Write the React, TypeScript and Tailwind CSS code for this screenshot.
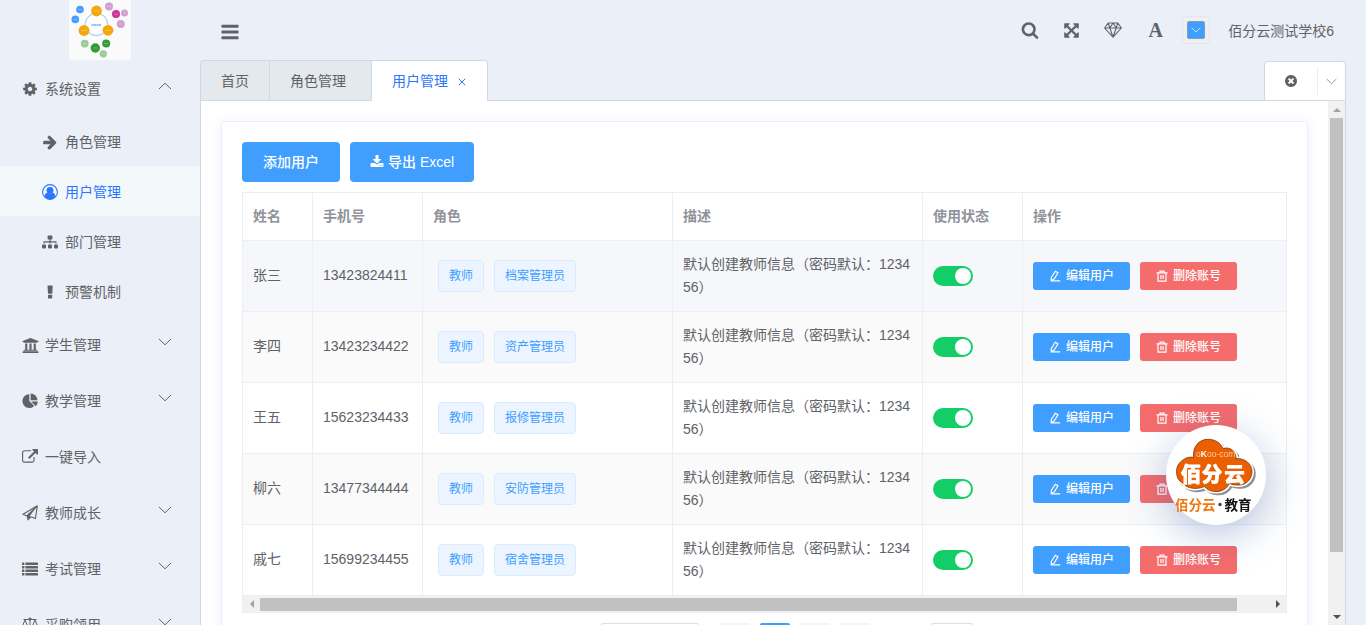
import React from 'react';
import { FaSitemap, FaUniversity } from 'react-icons/fa';

type IconProps = { className?: string };

const paths = {
    cog: 'M1152 896q0-106-75-181t-181-75-181 75-75 181 75 181 181 75 181-75 75-181zm512-109v222q0 12-8 23t-20 13l-185 28q-19 54-39 91 35 50 107 138 10 12 10 25t-9 23q-27 37-99 108t-94 71q-12 0-26-9l-138-108q-44 23-91 38-16 136-29 186-7 28-36 28h-222q-14 0-24.5-8.5t-11.5-21.5l-28-184q-49-16-90-37l-141 107q-10 9-25 9-14 0-25-11-126-114-165-168-7-10-7-23 0-12 8-23 15-21 51-66.5t54-70.5q-27-50-41-99l-183-27q-13-2-21-12.5t-8-23.5v-222q0-12 8-23t19-13l186-28q14-46 39-92-40-57-107-138-10-12-10-24 0-10 9-23 26-36 98.5-107.5t94.5-71.5q13 0 26 10l138 107q44-23 91-38 16-136 29-186 7-28 36-28h222q14 0 24.5 8.5t11.5 21.5l28 184q49 16 90 37l142-107q9-9 24-9 13 0 25 10 129 119 165 170 7 8 7 22 0 12-8 23-15 21-51 66.5t-54 70.5q26 50 41 98l183 28q13 2 21 12.5t8 23.5z',
    arrowRight:
        'M1600 960q0 54-37 91l-651 651q-39 37-91 37-51 0-90-37l-75-75q-38-38-38-91t38-91l293-293h-704q-52 0-84.5-37.5t-32.5-90.5v-128q0-53 32.5-90.5t84.5-37.5h704l-293-294q-38-36-38-90t38-90l75-75q38-38 90-38 53 0 91 38l651 651q37 35 37 90z',
    bars: 'M1664 1344v128q0 26-19 45t-45 19h-1408q-26 0-45-19t-19-45v-128q0-26 19-45t45-19h1408q26 0 45 19t19 45zm0-512v128q0 26-19 45t-45 19h-1408q-26 0-45-19t-19-45v-128q0-26 19-45t45-19h1408q26 0 45 19t19 45zm0-512v128q0 26-19 45t-45 19h-1408q-26 0-45-19t-19-45v-128q0-26 19-45t45-19h1408q26 0 45 19t19 45z',
    search: 'M1216 832q0-185-131.5-316.5t-316.5-131.5-316.5 131.5-131.5 316.5 131.5 316.5 316.5 131.5 316.5-131.5 131.5-316.5zm512 832q0 52-38 90t-90 38q-54 0-90-38l-343-342q-179 124-399 124-143 0-273.5-55.5t-225-150-150-225-55.5-273.5 55.5-273.5 150-225 225-150 273.5-55.5 273.5 55.5 225 150 150 225 55.5 273.5q0 220-124 399l343 343q37 37 37 90z',
    externalLink:
        'M1408 928v320q0 119-84.5 203.5t-203.5 84.5h-832q-119 0-203.5-84.5t-84.5-203.5v-832q0-119 84.5-203.5t203.5-84.5h704q14 0 23 9t9 23v64q0 14-9 23t-23 9h-704q-66 0-113 47t-47 113v832q0 66 47 113t113 47h832q66 0 113-47t47-113v-320q0-14 9-23t23-9h64q14 0 23 9t9 23zm384-864v512q0 26-19 45t-45 19-45-19l-176-176-652 652q-10 10-23 10t-23-10l-114-114q-10-10-10-23t10-23l652-652-176-176q-19-19-19-45t19-45 45-19h512q26 0 45 19t19 45z',
    timesCircle:
        'M1277 1122q0-26-19-45l-181-181 181-181q19-19 19-45 0-27-19-46l-90-90q-19-19-46-19-26 0-45 19l-181 181-181-181q-19-19-45-19-27 0-46 19l-90 90q-19 19-19 46 0 26 19 45l181 181-181 181q-19 19-19 45 0 27 19 46l90 90q19 19 46 19 26 0 45-19l181-181 181 181q19 19 45 19 27 0 46-19l90-90q19-19 19-46zm387-226q0 209-103 385.5t-279.5 279.5-385.5 103-385.5-103-279.5-279.5-103-385.5 103-385.5 279.5-279.5 385.5-103 385.5 103 279.5 279.5 103 385.5z',
    expand: 'M1411 541l-355 355 355 355 144-144q29-31 70-14 39 17 39 59v448q0 26-19 45t-45 19h-448q-42 0-59-40-17-39 14-69l144-144-355-355-355 355 144 144q31 30 14 69-17 40-59 40h-448q-26 0-45-19t-19-45v-448q0-42 40-59 39-17 69 14l144 144 355-355-355-355-144 144q-19 19-45 19-12 0-24-5-40-17-40-59v-448q0-26 19-45t45-19h448q42 0 59 40 17 39-14 69l-144 144 355 355 355-355-144-144q-31-30-14-69 17-40 59-40h448q26 0 45 19t19 45v448q0 42-39 59-13 5-25 5-26 0-45-19z',
    download:
        'M1344 1344q0-26-19-45t-45-19-45 19-19 45 19 45 45 19 45-19 19-45zm256 0q0-26-19-45t-45-19-45 19-19 45 19 45 45 19 45-19 19-45zm128-224v320q0 40-28 68t-68 28h-1472q-40 0-68-28t-28-68v-320q0-40 28-68t68-28h465l135 136q58 56 136 56t136-56l136-136h464q40 0 68 28t28 68zm-325-569q17 41-14 70l-448 448q-18 19-45 19t-45-19l-448-448q-31-29-14-70 17-39 59-39h256v-448q0-26 19-45t45-19h256q26 0 45 19t19 45v448h256q42 0 59 39z',
};

const Glyph = ({ name, className }: IconProps & { name: keyof typeof paths }) => (
    <svg viewBox="0 0 1792 1792" fill="currentColor" className={className} aria-hidden="true">
        <path d={paths[name]} />
    </svg>
);

const UserIcon = ({ className }: IconProps) => (
    <svg viewBox="0 0 16 16" className={className} aria-hidden="true">
        <circle cx="8" cy="8" r="7.4" fill="none" stroke="currentColor" strokeWidth="1.1" />
        <circle cx="8" cy="6.3" r="3.4" fill="currentColor" />
        <path d="M2.4 12.6c.4-2 1.4-3.7 3.100-4 .7.7 1.500 1 2.500 1s1.800-.3 2.500-1c1.700.3 2.700 2 3.100 4A7.200 7.200 0 0 1 8 15.400a7.200 7.200 0 0 1-5.600-2.800z" fill="currentColor" />
    </svg>
);

const ExclamationIcon = ({ className }: IconProps) => (
    <svg viewBox="0 0 14 14" fill="currentColor" className={className} aria-hidden="true">
        <path d="M5 .5h4.200c.3 0 .5.2.5.5l-.4 7.200c0 .3-.2.5-.5.5H5.500c-.3 0-.5-.2-.5-.5L4.500 1c0-.3.2-.5.5-.5z" />
        <rect x="5" y="9.800" width="4.200" height="3.600" rx=".5" />
    </svg>
);

const PieIcon = ({ className }: IconProps) => (
    <svg viewBox="0 0 16 16" fill="currentColor" className={className} aria-hidden="true">
        <path d="M7.300 1.200v6.900l4.900 4.900A6.900 6.900 0 1 1 7.300 1.200z" />
        <path d="M8.600.5a6.800 6.800 0 0 1 6.800 6.800H8.600z" />
        <path d="M9 8.500h6.800a6.800 6.800 0 0 1-2 4.700z" />
    </svg>
);

const PlaneIcon = ({ className }: IconProps) => (
    <svg viewBox="0 0 16 16" className={className} aria-hidden="true">
        <path d="M15.300.8 1 9.200l3.900 1.700L15.300.8l-1.900 12.800-4.500-1.900" fill="none" stroke="currentColor" strokeWidth="1.100" strokeLinejoin="round" />
        <path d="M4.800 10.500 15.300.8 7.800 10.900l1.600 1.300-3.900 3.600z" fill="currentColor" />
    </svg>
);

const ListIcon = ({ className }: IconProps) => (
    <svg viewBox="0 0 16 16" fill="currentColor" className={className} aria-hidden="true">
        {[1.6, 5.1, 8.6, 12.1].map((y) => (
            <g key={y}>
                <rect x="0" y={y} width="2.4" height="2.4" rx=".3" />
                <rect x="3.4" y={y} width="12.6" height="2.4" rx=".3" />
            </g>
        ))}
    </svg>
);

const ScaleIcon = ({ className }: IconProps) => (
    <svg viewBox="0 0 18 16" fill="none" stroke="currentColor" strokeWidth="1" className={className} aria-hidden="true">
        <path d="M2.500 2.500h13M9 2v12.500M5.500 14.800h7M4 3 1 10h6zM14 3l-3 7h6z" />
        <circle cx="9" cy="2" r="1.100" fill="currentColor" />
        <path d="M1 10a3 2.500 0 0 0 6 0zM11 10a3 2.500 0 0 0 6 0z" fill="currentColor" />
    </svg>
);

const DiamondIcon = ({ className }: IconProps) => (
    <svg viewBox="0 0 18 16" fill="none" stroke="currentColor" strokeWidth="1.1" strokeLinejoin="round" className={className} aria-hidden="true">
        <path d="M4.200 1h9.600l3.600 5L9 15.200.6 6zM.6 6h16.800M5.800 6 9 15l3.200-9M4.200 1l1.600 5L9 1l3.200 5 1.600-5" />
    </svg>
);

const Chevron = ({ className }: IconProps) => (
    <svg viewBox="0 0 14 14" fill="none" stroke="currentColor" strokeWidth="1" strokeLinecap="round" className={className} aria-hidden="true">
        <path d="M1.200 4.200 7 9.800l5.800-5.600" />
    </svg>
);

const EditIcon = ({ className }: IconProps) => (
    <svg viewBox="0 0 12 12" fill="none" stroke="currentColor" strokeWidth="1.2" strokeLinejoin="round" className={className} aria-hidden="true">
        <path d="M6.300 1.200 9 2.700 5.200 9 2.200 10.500 2.300 7.500zM1.600 10.800h9.600" />
    </svg>
);

const TrashIcon = ({ className }: IconProps) => (
    <svg viewBox="0 0 12 12" fill="none" stroke="currentColor" strokeWidth="1.2" className={className} aria-hidden="true">
        <path d="M.5 2.800h11M4 2.800V1.100h4v1.700M2 2.800v8.400h8V2.800M4.900 5v4M7.100 5v4" />
    </svg>
);

const SchoolLogo = () => (
    <svg viewBox="0 0 62 60" className="h-15 w-[62px]" role="img" aria-label="logo">
        <rect width="62" height="60" fill="#fafafa" />
        <circle cx="27.5" cy="24.5" r="15" fill="#fff" />
        <circle cx="27.5" cy="24.5" r="11.2" fill="#fff" stroke="#a9d2f8" strokeWidth="1.2" />
        <path d="M22.500 25h10" stroke="#8fc4f5" strokeWidth="2" strokeDasharray="2.200 .3" />
        <g fill="#f5a60a">
            <circle cx="27.5" cy="11" r="5.4" />
            <circle cx="15" cy="30.5" r="5.4" />
            <circle cx="39" cy="30.3" r="5.4" />
        </g>
        <g fill="#409eff">
            <circle cx="11" cy="9.5" r="3.8" />
            <circle cx="6.300" cy="19.4" r="3.8" />
        </g>
        <g fill="#d09fd2">
            <circle cx="40" cy="6.5" r="4" />
            <circle cx="55.5" cy="13" r="3.5" />
            <circle cx="51.7" cy="24" r="4" />
        </g>
        <circle cx="47" cy="14" r="4" fill="#ca319b" />
        <g fill="#98cb98">
            <circle cx="15.7" cy="43.6" r="3.9" />
            <circle cx="34.3" cy="53.8" r="3.6" />
        </g>
        <g fill="#329b37">
            <circle cx="26.3" cy="48" r="4.7" />
            <circle cx="37.2" cy="43.6" r="4" />
        </g>
        <path d="M24.500 11h6M12 30.500h6M36.500 30.500h5M9 9.600h4M4.500 19.400h4M24 48h4.600M35.200 43.600h4M45 14.200h4M38 6.500h4M54 13h3M50 24h3.500M13.700 43.600h4M32.500 53.800h3.600" stroke="#fff" strokeOpacity=".4" strokeWidth=".8" />
    </svg>
);

const cloud =
    'M17 35C20 32.500 24 31.500 27.500 32.500C26.500 21.500 33 14.300 42 14.300C49.500 14.300 54.500 18 57 23.500C64 21.500 70 26 70 33.500C79 33 86 39 86 46.500C86 55 79 61 71 60C68.500 60 65.500 59.500 63.500 58.500C60 65 54 67 49 66.500C44 66.300 41 64.500 38.500 61.500C31 65 20.500 63.500 17.500 58.500C12.500 56.500 10.500 51.500 10.500 46.500C10.500 41.500 13 37.500 17 35Z';

const CloudLogo = () => (
    <svg viewBox="0 0 100 100" className="size-full" role="img" aria-label="佰分云教育">
        <path d={cloud} transform="translate(2 2)" fill="#8f8f8f" stroke="#8f8f8f" strokeWidth="3.5" />
        <path d={cloud} fill="#ea6000" stroke="#fff" strokeWidth="4" />
        <path d={cloud} fill="#ea6000" stroke="#7a3a12" strokeWidth=".8" />
        <g fontFamily="'Liberation Sans','Noto Sans CJK SC',sans-serif">
            <text x="30" y="31.500" fontSize="8.5" fill="#ffc9a0">
                o<tspan fontWeight="700" fill="#fff">K</tspan>oo-com
            </text>
            <text x="15 36 58.500" y="56.500" fontSize="20" fontWeight="700" fill="#fff" stroke="#fff" strokeWidth="1.2" strokeLinejoin="round">
                佰分云
            </text>
            <g fontSize="13.5" fontWeight="700">
                <text x="9" y="85" fill="#f07810">佰分云</text>
                <text x="58.5" y="85" fill="#111">教育</text>
            </g>
        </g>
        <circle cx="54" cy="79.5" r="1.7" fill="#444" />
    </svg>
);

const subMenus = [
    { label: '角色管理', icon: <Glyph name="arrowRight" className="size-4" /> },
    { label: '用户管理', icon: <UserIcon className="size-4" />, active: true },
    { label: '部门管理', icon: <FaSitemap className="size-4" /> },
    { label: '预警机制', icon: <ExclamationIcon className="size-[14px]" /> },
];

const menus = [
    { label: '学生管理', icon: <FaUniversity className="size-[17px]" />, children: true },
    { label: '教学管理', icon: <PieIcon className="size-4" />, children: true },
    { label: '一键导入', icon: <Glyph name="externalLink" className="size-4" /> },
    { label: '教师成长', icon: <PlaneIcon className="size-4" />, children: true },
    { label: '考试管理', icon: <ListIcon className="size-4" />, children: true },
    { label: '采购领用', icon: <ScaleIcon className="h-4 w-[18px]" />, children: true },
];

const users = [
    { name: '张三', phone: '13423824411', role: '档案管理员', bg: 'bg-[#f5f7fa]' },
    { name: '李四', phone: '13423234422', role: '资产管理员', bg: 'bg-[#fafafa]' },
    { name: '王五', phone: '15623234433', role: '报修管理员', bg: 'bg-white' },
    { name: '柳六', phone: '13477344444', role: '安防管理员', bg: 'bg-[#fafafa]' },
    { name: '戚七', phone: '15699234455', role: '宿舍管理员', bg: 'bg-white' },
];

const Sidebar = () => (
    <aside className="w-50 shrink-0">
        <div className="flex h-15 justify-center">
            <SchoolLogo />
        </div>
        <nav>
            <a href="#" className="flex h-14 items-center gap-[5px] px-5 pt-0.5">
                <span className="flex w-5 justify-center">
                    <Glyph name="cog" className="size-4" />
                </span>
                <span className="flex-1">系统设置</span>
                <span className="mr-2 pb-1.5">
                    <Chevron className="size-[14px] rotate-180" />
                </span>
            </a>
            {subMenus.map((item) => (
                <a
                    key={item.label}
                    href="#"
                    className={`flex h-[50px] items-center gap-[5px] pt-0.5 pl-10 ${
                        item.active ? 'bg-[#f3f8fb] text-[#2d74ff]' : ''
                    }`}
                >
                    <span className="flex w-5 justify-center">{item.icon}</span>
                    {item.label}
                </a>
            ))}
            {menus.map((item) => (
                <a key={item.label} href="#" className="flex h-14 items-center gap-[5px] px-5 pt-0.5">
                    <span className="flex w-5 justify-center">{item.icon}</span>
                    <span className="flex-1">{item.label}</span>
                    {item.children && (
                        <span className="mr-2 pb-1.5">
                            <Chevron className="size-[14px]" />
                        </span>
                    )}
                </a>
            ))}
        </nav>
    </aside>
);

const Header = () => (
    <header className="flex h-15 items-center justify-between pr-3 pl-5">
        <button type="button" aria-label="折叠菜单" className="pt-1">
            <Glyph name="bars" className="size-5" />
        </button>
        <div className="flex items-center">
            <button type="button" aria-label="搜索" className="flex w-10 justify-center">
                <Glyph name="search" className="size-[18px]" />
            </button>
            <button type="button" aria-label="全屏" className="flex w-[42px] justify-center">
                <Glyph name="expand" className="size-[17px]" />
            </button>
            <button type="button" aria-label="主题" className="flex w-[42px] justify-center">
                <DiamondIcon className="h-4 w-[18px]" />
            </button>
            <button type="button" className="flex w-[43px] justify-center font-['Liberation_Serif',serif] text-xl font-bold">
                A
            </button>
            <button
                type="button"
                aria-label="颜色"
                className="ml-[5px] flex size-7 items-center justify-center rounded border border-[#e6e6e6]"
            >
                <span className="flex size-[18px] items-center justify-center rounded-xs border border-[#8a99ad] bg-[#409eff] text-white">
                    <Chevron className="size-[10px]" />
                </span>
            </button>
            <a href="#" className="ml-[18px] pt-0.5">
                佰分云测试学校6
            </a>
        </div>
    </header>
);

const Tabs = () => (
    <div className="flex h-[41px]">
        <a href="#" className="flex items-center rounded-tl border border-[#cfd8e6] bg-[#e4e9ed] px-5">
            首页
        </a>
        <a href="#" className="flex items-center border-y border-r border-[#cfd8e6] bg-[#e4e9ed] pr-[25px] pl-5">
            角色管理
        </a>
        <div className="flex items-center gap-[5px] rounded-tr border-t border-r border-[#cfd8e6] bg-white px-5 text-[#2d74ff]">
            <a href="#">用户管理</a>
            <button type="button" aria-label="关闭" className="flex w-[14px] justify-end pt-0.5 pr-px">
                <svg viewBox="0 0 8 8" className="size-2" stroke="currentColor" strokeWidth="1">
                    <path d="M.7.7l6.600 6.600M7.300.7.7 7.300" />
                </svg>
            </button>
        </div>
        <div className="flex-1 border-b border-[#cfd8e6]" />
        <div className="mt-px flex items-center rounded-t border border-[#cfd8e6] bg-white">
            <button type="button" aria-label="关闭全部" className="flex h-7 w-[53px] items-center justify-center border-r border-[#e8edf2]">
                <Glyph name="timesCircle" className="size-[14px]" />
            </button>
            <button type="button" aria-label="更多" className="flex w-[27px] justify-center text-[#5488b4]">
                <Chevron className="size-[11px]" />
            </button>
        </div>
    </div>
);

const UserTable = () => (
    <div className="mt-2.5 border border-[#ebeef5]">
        <table className="w-full table-fixed border-separate border-spacing-0 text-left leading-[23px]">
            <colgroup>
                <col className="w-[70px]" />
                <col className="w-[110px]" />
                <col className="w-[250px]" />
                <col className="w-[250px]" />
                <col className="w-[100px]" />
                <col />
            </colgroup>
            <thead className="text-[#909399]">
                <tr>
                    {['姓名', '手机号', '角色', '描述', '使用状态', '操作'].map((title) => (
                        <th key={title} className="border-r border-b border-[#ebeef5] px-2.5 py-3 font-bold last:border-r-0">
                            {title}
                        </th>
                    ))}
                </tr>
            </thead>
            <tbody>
                {users.map((user) => (
                    <tr key={user.phone} className={user.bg}>
                        <td className="border-r border-b border-[#ebeef5] px-2.5 pb-0.5">{user.name}</td>
                        <td className="border-r border-b border-[#ebeef5] px-2.5 pb-0.5">{user.phone}</td>
                        <td className="border-r border-b border-[#ebeef5] px-2.5">
                            <div className="flex gap-2.5 pl-[5px] text-xs text-[#409eff]">
                                <span className="flex h-8 items-center rounded border border-[#d9ecff] bg-[#ecf5ff] px-2.5">
                                    教师
                                </span>
                                <span className="flex h-8 items-center rounded border border-[#d9ecff] bg-[#ecf5ff] px-2.5">
                                    {user.role}
                                </span>
                            </div>
                        </td>
                        <td className="border-r border-b border-[#ebeef5] px-2.5 py-3 break-all">
                            默认创建教师信息（密码默认：123456）
                        </td>
                        <td className="border-r border-b border-[#ebeef5] px-2.5">
                            <input
                                type="checkbox"
                                role="switch"
                                defaultChecked
                                aria-label={`${user.name} 使用状态`}
                                className="flex h-5 w-10 appearance-none items-center rounded-full bg-[#c0ccda] px-0.5 before:size-4 before:rounded-full before:bg-white checked:justify-end checked:bg-[#13ce66]"
                            />
                        </td>
                        <td className="border-b border-[#ebeef5] px-2.5">
                            <div className="flex gap-2.5 text-xs font-medium text-white">
                                <button type="button" className="flex h-7 items-center gap-[5px] rounded-[3px] bg-[#409eff] px-4">
                                    <EditIcon className="size-3" />
                                    编辑用户
                                </button>
                                <button type="button" className="flex h-7 items-center gap-[5px] rounded-[3px] bg-[#f56c6c] px-4">
                                    <TrashIcon className="size-3" />
                                    删除账号
                                </button>
                            </div>
                        </td>
                    </tr>
                ))}
            </tbody>
        </table>
        {/* horizontal scroll bar */}
        <div className="flex h-4 items-center bg-[#f1f1f1]">
            <span className="flex w-[17px] justify-center">
                <svg viewBox="0 0 4 8" className="h-2 w-1" fill="#a3a3a3">
                    <path d="M4 0v8L0 4z" />
                </svg>
            </span>
            <div className="flex-1 pr-8">
                <div className="h-[13px] bg-[#c1c1c1]" />
            </div>
            <span className="flex w-[17px] justify-center">
                <svg viewBox="0 0 4 8" className="h-2 w-1" fill="#505050">
                    <path d="M0 0v8l4-4z" />
                </svg>
            </span>
        </div>
    </div>
);

const Pagination = () => (
    <div className="mt-2.5 flex h-7 justify-center pl-[45px]">
        <select aria-label="每页条数" className="w-[100px] appearance-none rounded-[3px] border border-[#dcdfe6] bg-white" />
        <button type="button" aria-label="上一页" className="ml-5 w-[30px] rounded-xs bg-[#f4f4f5]" />
        <button type="button" aria-label="第一页" className="ml-2.5 w-[30px] rounded-xs bg-[#409eff]" />
        <button type="button" aria-label="第二页" className="ml-2.5 w-[30px] rounded-xs bg-[#f4f4f5]" />
        <button type="button" aria-label="下一页" className="ml-2.5 w-[30px] rounded-xs bg-[#f4f4f5]" />
        <input aria-label="前往页码" className="ml-15 w-11 rounded-[3px] border border-[#dcdfe6] bg-white" />
    </div>
);

export const App = () => {
    return (
        <div
            lang="zh-CN"
            className="flex h-screen overflow-hidden bg-[#ebeff7] font-['Liberation_Sans','Noto_Sans_CJK_SC',sans-serif] text-sm text-[#606266]"
        >
            <Sidebar />
            <div className="flex min-w-0 flex-1 flex-col pr-5">
                <Header />
                <Tabs />
                <div className="flex min-h-0 flex-1 border-x border-[#cfd8e6] bg-white">
                    <main className="min-w-0 flex-1 overflow-hidden p-5">
                        <section className="rounded border border-[#ebeef5] bg-white p-5 shadow-[0_2px_12px_0_rgba(80,110,255,0.1)]">
                            <div className="flex gap-2.5 font-medium text-white">
                                <button type="button" className="h-10 rounded bg-[#409eff] px-[21px]">
                                    添加用户
                                </button>
                                <button type="button" className="flex h-10 items-center gap-1 rounded bg-[#409eff] px-5">
                                    <Glyph name="download" className="size-[14px]" />
                                    导出 Excel
                                </button>
                            </div>
                            <UserTable />
                            <Pagination />
                        </section>
                    </main>
                    {/* vertical scroll bar */}
                    <div className="flex w-[17px] flex-col items-center bg-[#f1f1f1]">
                        <span className="flex h-[17px] items-center">
                            <svg viewBox="0 0 8 4" className="h-1 w-2" fill="#a3a3a3">
                                <path d="M0 4h8L4 0z" />
                            </svg>
                        </span>
                        <div className="w-[13px] flex-1 pb-14">
                            <div className="h-full bg-[#c1c1c1]" />
                        </div>
                        <span className="flex h-[17px] items-center">
                            <svg viewBox="0 0 8 4" className="h-1 w-2" fill="#505050">
                                <path d="M0 0h8L4 4z" />
                            </svg>
                        </span>
                    </div>
                </div>
            </div>
            <a
                href="#"
                className="fixed right-[100px] bottom-[100px] size-[100px] rounded-full bg-white shadow-[0_10px_40px_0_rgba(50,90,170,0.35)]"
            >
                <CloudLogo />
            </a>
        </div>
    );
};

export default App;
